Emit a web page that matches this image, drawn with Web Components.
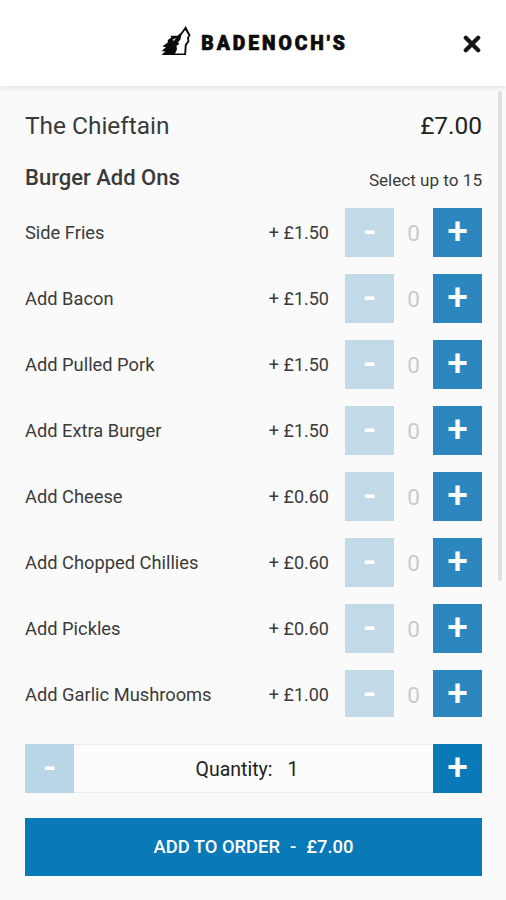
<!DOCTYPE html>
<html lang="en">
<head>
<meta charset="utf-8">
<title>Badenoch's – The Chieftain</title>
<style>
body{margin:0;background:#fafafa;font-family:Roboto,"Liberation Sans",sans-serif;color:#3a3a3a}
</style>
</head>
<body>
<order-page></order-page>
<script>
function define(name, html, init) {
  const t = document.createElement('template');
  t.innerHTML = html;
  customElements.define(name, class extends HTMLElement {
    connectedCallback() {
      if (this.shadowRoot) return;
      this.attachShadow({mode: 'open'}).append(t.content.cloneNode(true));
      if (init) init.call(this, this.shadowRoot);
    }
  });
}

define('brand-logo', `
<style>
:host{display:flex;align-items:center;color:#0c0c0c}
svg{display:block;width:31px;height:31px;margin-right:9px}
span{font-size:19.3px;font-weight:900;line-height:24px;letter-spacing:2.95px;white-space:nowrap;-webkit-text-stroke:.7px #0c0c0c;padding-top:5px}
</style>
<svg viewBox="0 0 32 32">
<path fill="#0c0c0c" d="M25.500 0 L30.500 9.500 L28.800 12.500 L29.300 16 L26.500 20 L25.800 30 L0.500 30 L4.500 26 L0.500 26 L5 22 L1.500 21 L7 17 L7 14.500 L10.500 12 L10 10 L17 10 L21 6.500Z"/>
<path fill="#fff" d="M25 4 L28.300 9.500 L26.900 12 L27.400 15.500 L24.600 19 L24 28.300 L14.500 28.300 L16.500 24 L16 20.500 L19 18.500 L17.500 17 L20 14 L21 9.500Z"/>
<path fill="#fff" d="M11.500 14.500 L15.500 12.500 L13.500 15.200Z"/>
</svg>
<span>BADENOCH'S</span>`);

define('close-button', `
<style>:host{display:block;width:18px;height:18px}svg{display:block}</style>
<svg width="18" height="18" viewBox="0 0 18 18"><path d="M2.800 2.800 L15.200 15.200 M15.200 2.800 L2.800 15.200" stroke="#161616" stroke-width="4.200" stroke-linecap="round"/></svg>`);

define('app-header', `
<style>
:host{display:grid;grid-template-columns:1fr auto 1fr;align-items:center;height:86px;box-sizing:border-box;padding:0 25px 0 28px;background:#fff;box-shadow:0 1px 6px rgba(0,0,0,.12);position:relative;z-index:1}
brand-logo{grid-column:2;margin-top:-3px}
close-button{grid-column:3;justify-self:end;margin-top:1px}
</style>
<brand-logo></brand-logo><close-button></close-button>`);

define('step-button', `
<style>
:host{display:flex;align-items:center;justify-content:center;flex:none;width:49px;height:49px;background:var(--fill,#2b87bd);color:#fff;font-size:37px;font-weight:500;line-height:49px}
:host([off]){background:var(--off,#c2d9e7)}
span{display:block;margin-top:-2px}
</style><span><slot></slot></span>`);

define('add-on', `
<style>
:host{display:flex;align-items:center;height:49px;margin-bottom:17px;font-size:18px}
.name{flex:1;font-size:18.300px}
.price{margin-right:16px}
.count{width:39px;text-align:center;color:#cacaca;font-size:22.500px}
</style>
<span class="name"><slot></slot></span><span class="price"></span>
<step-button off>-</step-button><span class="count">0</span><step-button>+</step-button>`,
function (r) { r.querySelector('.price').textContent = '+ ' + this.getAttribute('price'); });

define('quantity-bar', `
<style>
:host{display:flex;height:49px;--fill:#0a79b7;--off:#b9d6e7;color:#222;font-size:19.500px}
div{flex:1;display:flex;justify-content:center;align-items:center;gap:15px;border:solid #ebebeb;border-width:1px 0;background:#fcfcfc;padding:2px 13px 0 0}
</style>
<step-button off>-</step-button><div><span>Quantity:</span><span>1</span></div><step-button>+</step-button>`);

define('order-button', `
<style>
:host{display:flex;justify-content:center;align-items:center;height:58px;box-sizing:border-box;padding-bottom:2px;background:#0a79b7;color:#fff;font-size:18.350px;font-weight:500;gap:10px}
</style>
<span>ADD TO ORDER</span><span>-</span><span>£7.00</span>`);

define('scroll-thumb', `<style>:host{display:block;width:3.500px;height:490px;background:#dfdfdf;border-radius:2px;position:absolute;right:4.500px;top:5px}</style>`);

define('order-page', `
<style>
:host{display:flex;flex-direction:column;height:900px;background:#fafafa}
main{height:631px;overflow:hidden;position:relative;box-sizing:border-box;padding:0 24px 0 25px}
.line{display:flex;justify-content:space-between}
.title{height:66px;font-size:24.450px;line-height:79px}
.title b{font-weight:400;color:#222}
.sub{height:56px;line-height:51px;font-size:17.100px}
.sub b{font-weight:500;font-size:22px}
.sub span{padding-top:3px}
footer{padding:27px 24px 24px 25px}
order-button{margin-top:25px}
</style>
<app-header></app-header>
<main>
<div class="line title"><span>The Chieftain</span><b>£7.00</b></div>
<div class="line sub"><b>Burger Add Ons</b><span>Select up to 15</span></div>
<add-on price="£1.50">Side Fries</add-on>
<add-on price="£1.50">Add Bacon</add-on>
<add-on price="£1.50">Add Pulled Pork</add-on>
<add-on price="£1.50">Add Extra Burger</add-on>
<add-on price="£0.60">Add Cheese</add-on>
<add-on price="£0.60">Add Chopped Chillies</add-on>
<add-on price="£0.60">Add Pickles</add-on>
<add-on price="£1.00">Add Garlic Mushrooms</add-on>
<scroll-thumb></scroll-thumb>
</main>
<footer><quantity-bar></quantity-bar><order-button></order-button></footer>`);
</script>
</body>
</html>
